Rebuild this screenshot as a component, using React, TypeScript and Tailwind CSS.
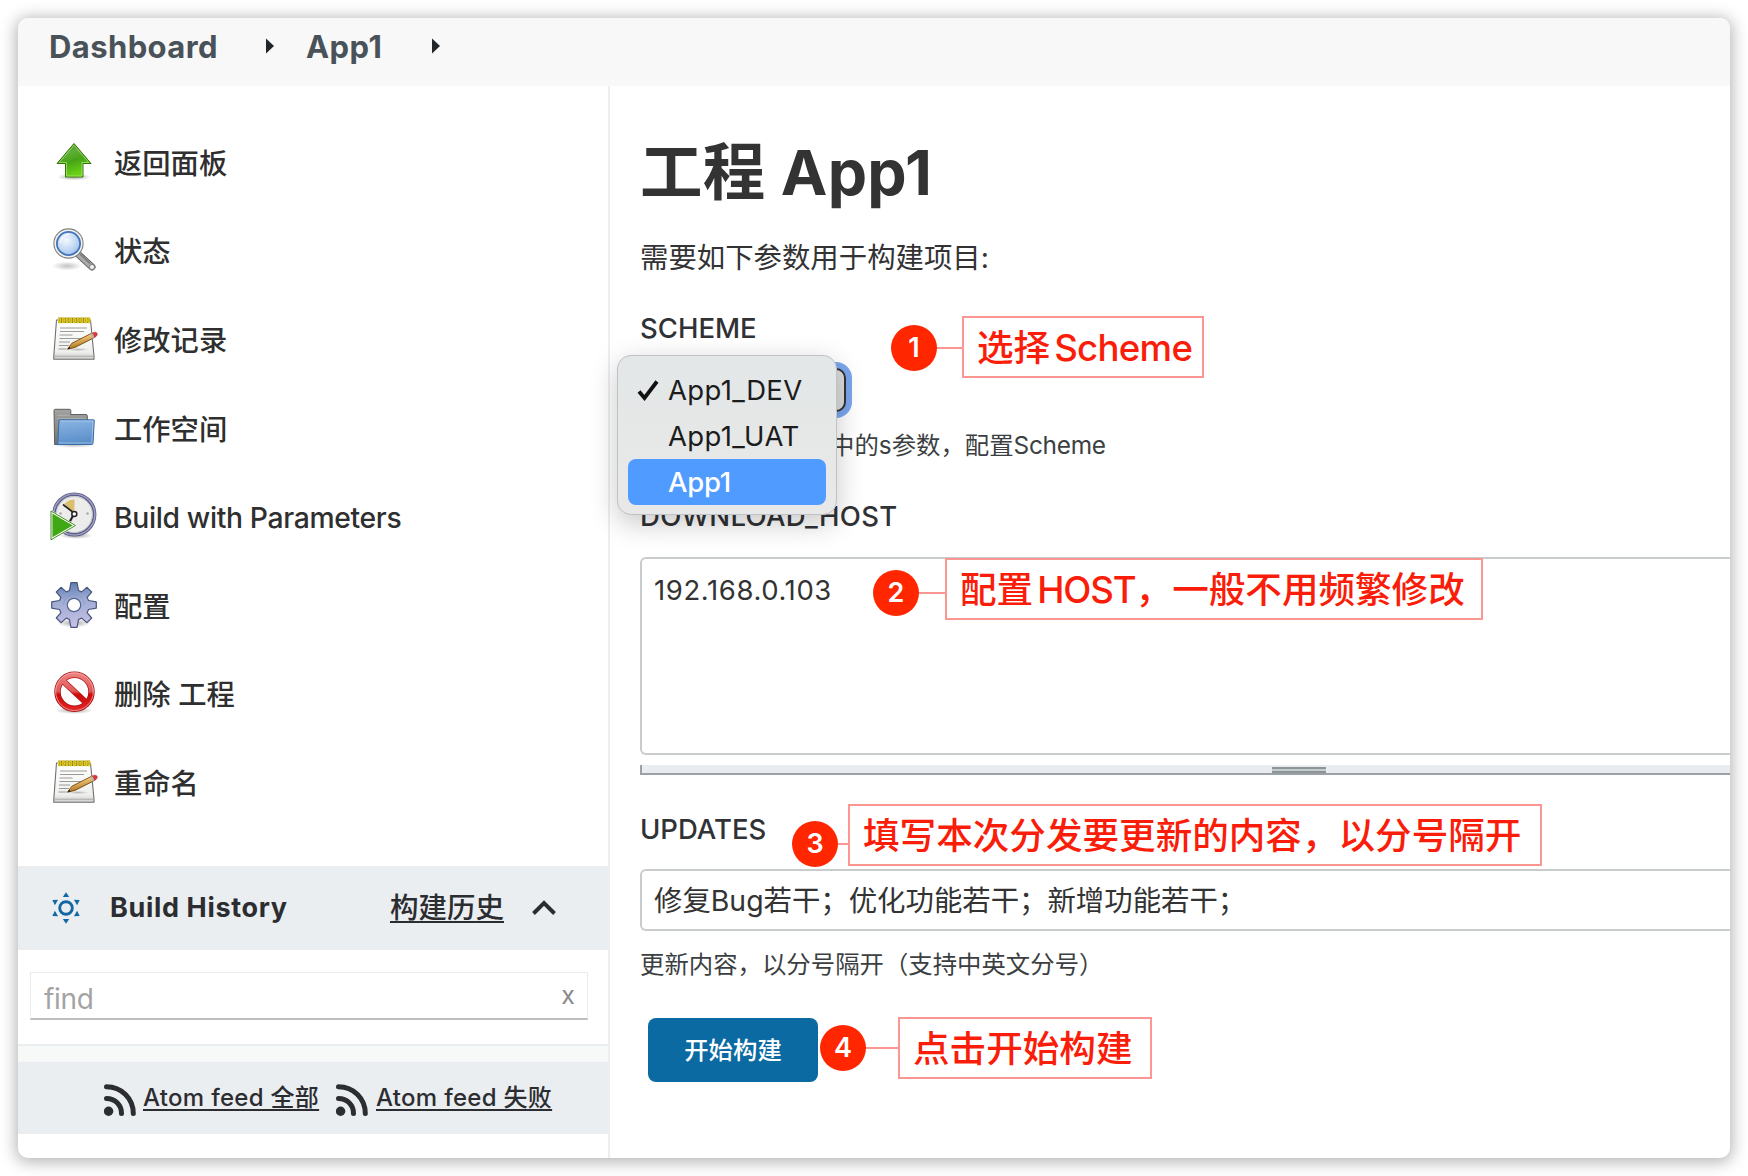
import type { ReactNode } from "react";

function UpArrowIcon() {
  return (
    <svg viewBox="0 0 48 48" className="size-12">
      <defs>
        <linearGradient id="upG" x1="0" y1="0" x2="0.3" y2="1">
          <stop offset="0" stopColor="#3f8f1c" />
          <stop offset="0.35" stopColor="#5fae38" />
          <stop offset="0.6" stopColor="#47a416" />
          <stop offset="1" stopColor="#6bd216" />
        </linearGradient>
        <radialGradient id="shG">
          <stop offset="0" stopColor="#000" stopOpacity="0.35" />
          <stop offset="1" stopColor="#000" stopOpacity="0" />
        </radialGradient>
      </defs>
      <ellipse cx="24" cy="39" rx="17" ry="3.5" fill="url(#shG)" />
      <path d="M24 5.5 41 25.5H33V39H15.5V25.5H7Z" fill="url(#upG)" stroke="#3a7304" strokeWidth="1" strokeLinejoin="round" />
      <path d="M24 7.3 38.8 24.5H32V38H16.5V24.5H9.2Z" fill="none" stroke="#b5ec8c" strokeWidth="0.8" opacity="0.8" />
    </svg>
  );
}

function SearchIcon() {
  return (
    <svg viewBox="0 0 48 48" className="size-12">
      <defs>
        <radialGradient id="lens" cx="0.4" cy="0.35" r="0.7">
          <stop offset="0" stopColor="#f4f9ff" />
          <stop offset="0.6" stopColor="#c3d9f4" />
          <stop offset="1" stopColor="#9dbfe9" />
        </radialGradient>
      </defs>
      <ellipse cx="17" cy="40" rx="15" ry="4.5" fill="url(#shG)" opacity="0.7" />
      <path d="m29 29 13 12" stroke="#555" strokeWidth="7" strokeLinecap="round" />
      <path d="m29 29 13 12" stroke="#a9a9a7" strokeWidth="5.2" strokeLinecap="round" />
      <path d="m30 28 10 9.5" stroke="#7b7b79" strokeWidth="1.6" />
      <circle cx="42" cy="41" r="2.6" fill="#eee" stroke="#666" strokeWidth="0.7" />
      <circle cx="18.5" cy="17.5" r="14.6" fill="#f1f1ef" stroke="#7f827f" strokeWidth="1.1" />
      <circle cx="18.5" cy="17.5" r="11.6" fill="url(#lens)" stroke="#4272b8" strokeWidth="1.8" />
      <path d="M10.5 17a8.4 8.4 0 0 1 9-8.5" stroke="#fff" strokeWidth="1.6" fill="none" opacity="0.7" />
    </svg>
  );
}

function NotepadIcon() {
  return (
    <svg viewBox="0 0 48 48" className="size-12">
      <defs>
        <linearGradient id="page" x1="0" y1="0" x2="0" y2="1">
          <stop offset="0" stopColor="#fff" />
          <stop offset="0.8" stopColor="#f0f0ee" />
          <stop offset="1" stopColor="#cfcfcd" />
        </linearGradient>
        <linearGradient id="pencil" x1="0.4" y1="0.3" x2="0.6" y2="0.8">
          <stop offset="0" stopColor="#efc77a" />
          <stop offset="1" stopColor="#b3731a" />
        </linearGradient>
      </defs>
      <path d="M6.5 5H40.5L44 41v3.2H3.8V41Z" fill="url(#page)" stroke="#6f716e" strokeWidth="1.1" strokeLinejoin="round" />
      <path d="M4.6 41.2H43.500" stroke="#a5a6a3" strokeWidth="0.9" />
      <path d="M10 13h27M10 16.5h24M9.5 20h13M9.5 23.5h25M9 27h11M9 30.5h10M8.5 34h8" stroke="#8f918e" strokeWidth="0.9" />
      <path d="M8 5.300H40" stroke="#7a6a10" strokeWidth="5.200" />
      <g fill="#b9a51c" stroke="#e3cf2a" strokeWidth="1.100">
        {[9.6, 13.3, 17, 20.7, 24.4, 28.1, 31.8, 35.5, 38.9].map((x) => (
          <ellipse key={x} cx={x} cy="5.3" rx="1.1" ry="2.6" />
        ))}
      </g>
      <ellipse cx="28" cy="34.500" rx="11" ry="1.600" fill="url(#shG)" opacity="0.7" />
      <path d="M17.500 34.200 21.800 28.300 41.500 18.300 44.300 22.600 25 32.400Z" fill="url(#pencil)" stroke="#704b12" strokeWidth="0.900" strokeLinejoin="round" />
      <path d="M40.200 19l2-1c1.300.8 2.200 2.400 2.200 4.500l-2.200 1.200c0-2-.7-3.600-2-4.700Z" fill="#b4b4b2" />
      <path d="M42.200 18c2-1 3.800-1.200 4.700 0 .8 1.200.2 2.500-.8 3.400l-1.700 1.200c0-2.100-.9-3.700-2.200-4.600Z" fill="#e2353a" stroke="#a81c20" strokeWidth="0.500" />
      <path d="M17.500 34.200 19.200 31.800 20.700 33.500Z" fill="#222" />
    </svg>
  );
}

function FolderIcon() {
  return (
    <svg viewBox="0 0 48 48" className="size-12">
      <defs>
        <linearGradient id="fold" x1="0" y1="0" x2="0.2" y2="1">
          <stop offset="0" stopColor="#8cb6e4" />
          <stop offset="1" stopColor="#5c8fca" />
        </linearGradient>
        <linearGradient id="foldB" x1="0" y1="0" x2="0" y2="1">
          <stop offset="0" stopColor="#a3a4a1" />
          <stop offset="1" stopColor="#71736f" />
        </linearGradient>
      </defs>
      <ellipse cx="24" cy="41" rx="22" ry="3" fill="url(#shG)" opacity="0.7" />
      <path d="M4.600 40.500 4 6.500c0-.8.4-1.200 1.200-1.200H19.500c.8 0 1.300.4 1.300 1.200v4H36c.8 0 1.300.4 1.300 1.200V40.500Z" fill="url(#foldB)" stroke="#5f615e" strokeWidth="1" />
      <path d="M7 11.500h12M7 14.500h29" stroke="#c2c3c0" strokeWidth="0.8" opacity="0.6" />
      <path d="M9.600 15.800H43.500c.6 0 .9.300.8.900L43 39c-.1 1-.6 1.500-1.500 1.500H5.500c1.300-.1 2.200-.7 2.300-2L9 16.500c0-.5.2-.7.6-.7Z" fill="url(#fold)" stroke="#3a6aa6" strokeWidth="1" />
      <path d="M10.300 17H43L41.800 39H8.700" fill="none" stroke="#b9d4f1" strokeWidth="0.8" opacity="0.8" />
    </svg>
  );
}

function ClockPlayIcon() {
  return (
    <svg viewBox="0 0 48 48" className="size-12">
      <ellipse cx="26" cy="43.500" rx="17" ry="3.500" fill="url(#shG)" />
      <circle cx="24.300" cy="22.500" r="20.300" fill="#ececea" stroke="#5d5d85" strokeWidth="3.600" />
      <circle cx="24.300" cy="22.500" r="20.600" fill="none" stroke="#9c9cc2" strokeWidth="1.500" />
      <circle cx="24.300" cy="22.500" r="18" fill="none" stroke="#bdbdc8" strokeWidth="0.900" />
      <path d="M24.300 22.500 14.500 11.500A15 15 0 0 1 24.600 7.500Z" fill="#dcbf6d" />
      <path d="M24 21 13 12.500" stroke="#222" strokeWidth="1.700" />
      <path d="m24 22 -5 9" stroke="#222" strokeWidth="2.200" />
      <circle cx="24.300" cy="22" r="2.500" fill="#fff" stroke="#222" strokeWidth="1.500" />
      <circle cx="37.500" cy="21.500" r="1.300" fill="#aaa" />
      <circle cx="10.500" cy="21.500" r="1.300" fill="#aaa" />
      <path d="M1.300 19.500 25 33.500 1.300 47.300Z" fill="#3fa814" stroke="#fff" strokeWidth="2.200" />
      <path d="M1 19 25.500 33.500 1 47.800Z" fill="none" stroke="#2d7a0b" strokeWidth="0.900" />
    </svg>
  );
}

const GEAR_ANGLES = [0, 45, 90, 135, 180, 225, 270, 315];

function GearIcon() {
  return (
    <svg viewBox="0 0 48 48" className="size-12">
      <defs>
        <linearGradient id="gear" gradientUnits="userSpaceOnUse" x1="22" y1="2" x2="26" y2="46">
          <stop offset="0" stopColor="#5f7fb3" />
          <stop offset="0.4" stopColor="#a0aed4" />
          <stop offset="0.7" stopColor="#b3b5dc" />
          <stop offset="1" stopColor="#c9c4e6" />
        </linearGradient>
      </defs>
      <ellipse cx="24" cy="42" rx="17" ry="4.500" fill="url(#shG)" />
      <path
        d="M19.500 9.500 20.900 1.700h6.200L28.500 9.500l3.200 1.400 5.300-4.600 4.700 4.700-4.600 5.300 1.400 3.200 7.800 1.400v6.200l-7.800 1.400-1.400 3.200 4.600 5.300-4.700 4.700-5.300-4.600-3.200 1.400-1.400 7.800h-6.200l-1.400-7.800-3.200-1.400-5.300 4.600-4.700-4.700 4.600-5.300-1.400-3.200-7.800-1.400v-6.200l7.800-1.400 1.400-3.200-4.600-5.300 4.700-4.700 5.300 4.600Z"
        fill="url(#gear)"
        stroke="#4a557e"
        strokeWidth="1.200"
        strokeLinejoin="round"
      />
      <path d="M24 24m-10.500 0a10.500 10.500 0 0 1 21 0" fill="none" stroke="#8795c4" strokeWidth="1" opacity="0.600" />
      <circle cx="24" cy="24" r="6.700" fill="#fff" stroke="#56608c" strokeWidth="1.200" />
    </svg>
  );
}

function ForbiddenIcon() {
  return (
    <svg viewBox="0 0 48 48" className="size-12">
      <defs>
        <linearGradient id="forb" gradientUnits="userSpaceOnUse" x1="0" y1="3" x2="0" y2="43">
          <stop offset="0" stopColor="#ee8482" />
          <stop offset="0.480" stopColor="#e05a58" />
          <stop offset="0.560" stopColor="#cc0a0a" />
          <stop offset="1" stopColor="#e22a2a" />
        </linearGradient>
      </defs>
      <ellipse cx="24" cy="41.500" rx="19" ry="3.500" fill="url(#shG)" />
      <circle cx="24.500" cy="22.700" r="17" fill="#fff" stroke="#a80f10" strokeWidth="6.400" />
      <path d="M12.500 11.500 36.500 34" stroke="#b01a1a" strokeWidth="6.200" />
      <circle cx="24.500" cy="22.700" r="17" fill="none" stroke="url(#forb)" strokeWidth="5" />
      <path d="M12.500 11.500 36.500 34" stroke="url(#forb)" strokeWidth="4.800" />
      <circle cx="24.500" cy="22.700" r="18.800" fill="none" stroke="#f6b9b7" strokeWidth="0.700" />
    </svg>
  );
}

function HistoryIcon() {
  return (
    <svg viewBox="0 0 32 32" className="size-8">
      <circle cx="16" cy="16" r="6.300" fill="none" stroke="#1268a3" strokeWidth="2.900" />
      {[0, 60, 120, 180, 240, 300].map((a) => (
        <path key={a} d="M12.800 5 16 0.200 19.200 5Z" fill="#1268a3" transform={`rotate(${a} 16 16)`} />
      ))}
    </svg>
  );
}

function RssIcon() {
  return (
    <svg viewBox="0 0 32 32" className="size-8 shrink-0" fill="none" stroke="#2b2d30" strokeWidth="5" strokeLinecap="round">
      <circle cx="4.600" cy="27.200" r="4.700" fill="#2b2d30" stroke="none" />
      <path d="M2.500 14.500C11 14.500 17.500 21 17.500 29.500" />
      <path d="M2.500 2.700C17.500 2.700 29.300 14.500 29.300 29.500" />
    </svg>
  );
}

const MENU: { label: string; icon: ReactNode; tracking?: string }[] = [
  { label: "返回面板", icon: <UpArrowIcon /> },
  { label: "状态", icon: <SearchIcon /> },
  { label: "修改记录", icon: <NotepadIcon /> },
  { label: "工作空间", icon: <FolderIcon /> },
  { label: "Build with Parameters", icon: <ClockPlayIcon />, tracking: "tracking-[-0.350px]" },
  { label: "配置", icon: <GearIcon /> },
  { label: "删除 工程", icon: <ForbiddenIcon /> },
  { label: "重命名", icon: <NotepadIcon /> },
];

function Breadcrumbs() {
  return (
    <header className="flex h-[68px] shrink-0 items-start bg-[#f8f8f8] pt-[9px] pl-[31px] text-[31px] leading-10 font-bold text-[#4a5259]">
      <span className="w-[217px] tracking-[0.400px]">Dashboard</span>
      <Caret />
      <span className="ml-[32px] w-[126px] tracking-[0.400px]">App1</span>
      <Caret />
    </header>
  );
}

function Caret() {
  return (
    <svg viewBox="0 0 8 16" className="mt-[11px] h-4 w-2 shrink-0">
      <path d="M0 0.500 8 8 0 15.500Z" fill="#22262a" />
    </svg>
  );
}

function Sidebar() {
  return (
    <aside className="flex w-[592px] shrink-0 flex-col border-r-2 border-[#eceff1]">
      <nav className="flex flex-col pt-[33px] pl-8">
        {MENU.map((m) => (
          <a key={m.label} className="flex h-[88.600px] items-center gap-4">
            <span className="mb-[3px] size-12 shrink-0">{m.icon}</span>
            <span className={`pt-px text-[28.300px] leading-9 font-medium text-[#2f2f2f] ${m.tracking ?? ""}`}>{m.label}</span>
          </a>
        ))}
      </nav>
      <div className="mt-[38px] flex h-[84px] shrink-0 items-center bg-[#ebeef1] pl-8">
        <HistoryIcon />
        <span className="ml-[28px] text-[27px] leading-9 font-bold tracking-[0.650px] text-[#2b2d30]">Build History</span>
        <a className="ml-auto text-[28.500px] leading-9 font-medium text-[#2b2d30] underline decoration-2 underline-offset-[3px]">构建历史</a>
        <svg viewBox="0 0 26 16" className="mr-[51px] ml-[27px] h-4 w-[26px]">
          <path d="M2.500 13.500 13 3l10.500 10.500" fill="none" stroke="#2b2d30" strokeWidth="3.900" />
        </svg>
      </div>
      <div className="flex h-[94px] shrink-0 items-start pt-[22px] pl-3">
        <div className="flex h-12 w-[558px] items-center justify-between border border-b-2 border-[#ebebeb] border-b-[#bcbec0] pr-3 pl-[13px]">
          <span className="pt-[7px] text-[28px] leading-9 tracking-[-0.300px] text-[#a3a3a3]">find</span>
          <span className="pb-px text-[25px] leading-8 text-[#8a8a8a]">x</span>
        </div>
      </div>
      <div className="h-[18px] shrink-0 border-t-2 border-[#ebeef1] bg-[#f7f8f8]" />
      <div className="flex h-[72px] shrink-0 items-center bg-[#ebeef1] pt-1 pl-[86px] text-[24px] leading-8 font-medium tracking-[0.300px] text-[#2b2d30]">
        <RssIcon />
        <a className="ml-[7px] w-[177px] pb-1 whitespace-nowrap underline decoration-2 underline-offset-[3px]">Atom feed 全部</a>
        <span className="ml-4 flex items-center">
          <RssIcon />
          <a className="ml-2 pb-1 whitespace-nowrap underline decoration-2 underline-offset-[3px]">Atom feed 失败</a>
        </span>
      </div>
    </aside>
  );
}

function Note({ n, place, drop, gap, width, children }: { n: number; place: string; drop: string; gap: string; width: string; children: ReactNode }) {
  return (
    <div className={`absolute flex items-start ${place}`}>
      <span className={`flex items-center ${drop}`}>
        <span className="flex size-[46px] items-center justify-center rounded-full bg-[#ff2600] pb-0.5 text-[27px] leading-none font-semibold text-white">{n}</span>
        <span className={`h-0.5 bg-[#fb9692] ${gap}`} />
      </span>
      <span className={`flex h-[62px] items-center border-2 border-[#fb9692] pt-[3px] pl-[13px] text-[36.600px] leading-none font-medium whitespace-nowrap text-[#f91d0a] ${width}`}>
        {children}
      </span>
    </div>
  );
}

function SchemeSelect() {
  return (
    <div className="relative mt-[22px] h-11 w-[206px] rounded-[10px] border-2 border-[#333] bg-[#dcdcdc] shadow-[0_0_0_6px_#7ba6ee]">
      <ul className="absolute top-[-15px] left-[-25px] z-10 h-[160px] w-[220px] rounded-[14px] border border-[#bfc3c4] bg-[#e7e8e8] bg-linear-to-b from-[#e3e7e7] to-[#e9e8e8] px-[10px] pt-[11px] text-[27.500px] leading-[46px] tracking-[0.350px] text-[#1c1c1c] shadow-[0_8px_28px_rgba(0,0,0,0.220)]">
        <li className="flex h-[46px] items-center">
          <svg viewBox="0 0 22 22" className="ml-[9px] size-[22px]">
            <path d="m2 12.500 5.500 6.500L20 2.500" fill="none" stroke="#111" strokeWidth="3.800" />
          </svg>
          <span className="ml-[9px]">App1_DEV</span>
        </li>
        <li className="h-[46px] pl-10">App1_UAT</li>
        <li className="h-[46px] rounded-[8px] bg-[#4f9bff] pl-10 font-medium tracking-[-0.300px] text-white">App1</li>
      </ul>
    </div>
  );
}

const LABEL = "text-[27.500px] leading-9 font-medium text-[#303235]";

function BuildForm() {
  return (
    <main className="relative flex min-w-0 flex-1 flex-col pt-[46px] pl-[30px] text-[#333]">
      <h1 className="text-[62.500px] leading-[80px] font-bold tracking-[0.300px] text-[#333]">工程 App1</h1>
      <p className="mt-[26px] text-[28.400px] leading-10">需要如下参数用于构建项目:</p>

      <section className="mt-8 flex flex-col">
        <div className={LABEL}>SCHEME</div>
        <SchemeSelect />
        <p className="mt-[17px] pl-[190px] text-[24.400px] leading-8 text-[#3c3f42]">
          中的s参数，配置<span className="tracking-[-0.300px]">Scheme</span>
        </p>
      </section>

      <section className="mt-[37px] flex flex-col">
        <div className={`${LABEL} tracking-[0.350px]`}>DOWNLOAD_HOST</div>
        <div className="mt-[23px] h-[198px] rounded-l-[6px] border-2 border-r-0 border-[#c8cccd] px-3 pt-[13px] text-[27.500px] leading-9 tracking-[0.600px]">192.168.0.103</div>
        <div className="mt-[10px] flex h-[10px] justify-center border-b-2 border-l-2 border-[#9aa1a8] bg-[#e9edf0] pl-[226px]">
          <span className="mt-0.5 h-[6px] w-[54px] border-y-2 border-[#8d9496] bg-[#c5cccd]" />
        </div>
      </section>

      <section className="mt-9 flex flex-col">
        <div className={LABEL}>UPDATES</div>
        <div className="mt-[22px] flex h-[62px] items-center rounded-l-[6px] border-2 border-r-0 border-[#c8cccd] px-3 pt-0.5 text-[28.400px] leading-9">
          修复Bug若干；优化功能若干；新增功能若干；
        </div>
        <p className="mt-[17px] text-[24.400px] leading-8 text-[#3c3f42]">更新内容，以分号隔开（支持中英文分号）</p>
      </section>

      <button className="mt-[38px] ml-2 h-16 w-[170px] rounded-[8px] bg-[#0b6aa2] text-[24.400px] leading-none font-medium text-white">开始构建</button>

      <Note n={1} place="top-[230px] left-[281px]" drop="mt-[9px]" gap="w-[25px]" width="w-[242px]">
        选择<span className="ml-1 tracking-[-0.700px]">Scheme</span>
      </Note>
      <Note n={2} place="top-[472px] left-[263px]" drop="mt-[12px]" gap="w-[26px]" width="w-[538px]">
        配置<span className="ml-1 tracking-[-1.100px]">HOST</span>，一般不用频繁修改
      </Note>
      <Note n={3} place="top-[718px] left-[182px]" drop="mt-[17px]" gap="w-[10px]" width="w-[694px]">填写本次分发要更新的内容，以分号隔开</Note>
      <Note n={4} place="top-[931px] left-[210px]" drop="mt-[8px]" gap="w-[32px]" width="w-[254px]">点击开始构建</Note>
    </main>
  );
}

export default function App() {
  return (
    <div className="h-[1176px] w-[1748px] overflow-hidden bg-white p-[18px] font-['Inter','Noto_Sans_CJK_SC',sans-serif]">
      <div className="flex h-[1140px] w-[1712px] flex-col overflow-hidden rounded-[10px] bg-white shadow-[0_2px_16px_2px_rgba(0,0,0,0.300)]">
        <Breadcrumbs />
        <div className="flex min-h-0 flex-1">
          <Sidebar />
          <BuildForm />
        </div>
      </div>
    </div>
  );
}
